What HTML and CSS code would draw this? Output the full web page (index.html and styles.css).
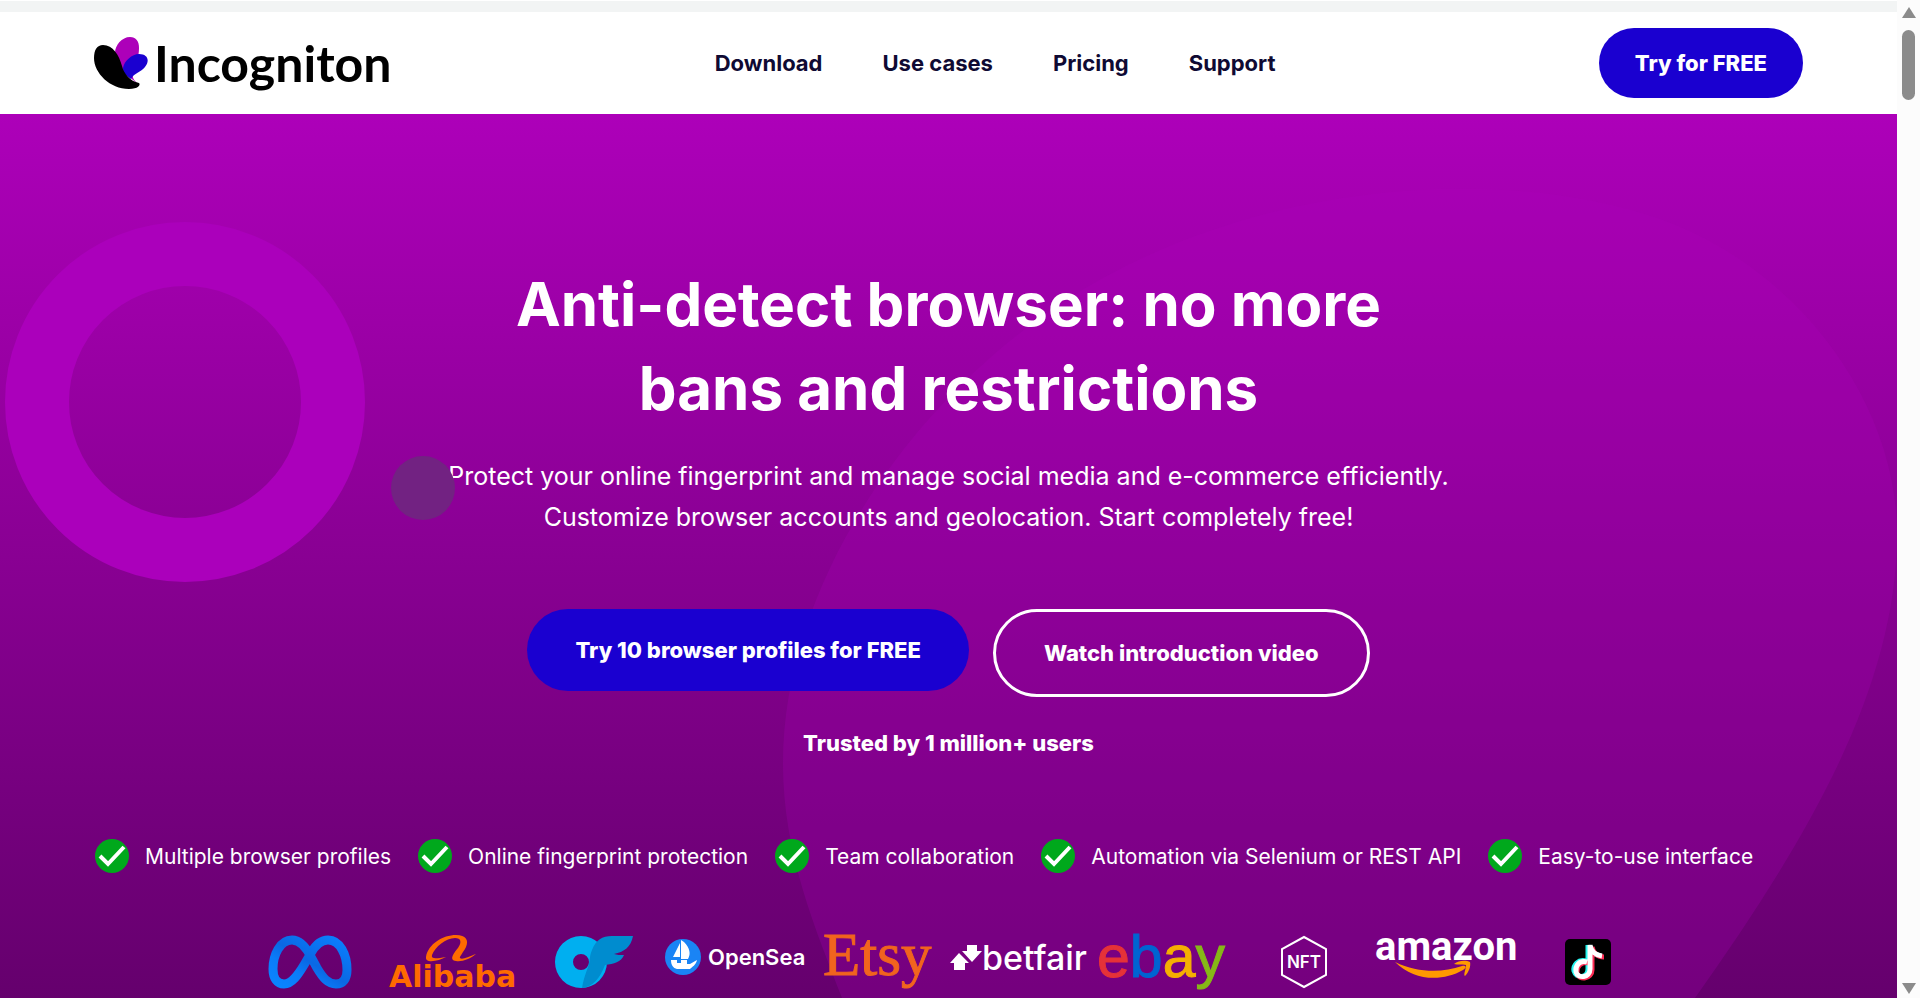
FILE: index.html
```html
<!DOCTYPE html>
<html lang="en">
<head>
    <meta charset="UTF-8">
    <meta name="viewport" content="width=device-width, initial-scale=1.0">
    <title>Incogniton</title>
    <link rel="stylesheet" href="styles.css">
</head>
<body>
    <div class="page">
        <div class="top-strip"></div>
        <header class="header">
            <a href="#" class="brand">
                <svg width="54" height="52" viewBox="0 0 54 52" aria-hidden="true">
                    <path fill="#ad00b9" d="M36 0C28 0 21 8 21 16L28 34L44 47C40 43 38 41 39 37C42 28 45 20 45 11C45 4 42 0 36 0Z"/>
                    <path fill="#1a00d0" d="M45 17C54 17 56 24 51 30C47 35 40 36 37 42C32 39 29 36 29 31C30 24 38 17 45 17Z"/>
                    <path d="M9 8C3 8 0 13 0 21C0 36 16 52 35 52C44 52 47 48 45 46C36 44 30 37 28 29C25 18 19 8 9 8Z"/>
                </svg>
                <span class="brand-name">Incogniton</span>
            </a>
            <nav class="nav">
                <a href="#">Download</a>
                <a href="#">Use cases</a>
                <a href="#">Pricing</a>
                <a href="#">Support</a>
            </nav>
            <button class="btn btn-small">Try for FREE</button>
        </header>

        <main class="hero">
            <svg class="blob" viewBox="0 0 1897 884" preserveAspectRatio="none" aria-hidden="true">
                <path d="M842 884C816 816 783 740 783 650C783 470 910 290 1060 190C1250 65 1500 50 1660 105C1800 155 1897 290 1897 420C1897 580 1800 735 1695 884Z"/>
            </svg>
            <div class="ring"></div>
            <div class="dot"></div>

            <h1>Anti-detect browser: no more<br>bans and restrictions</h1>
            <p class="lead">Protect your online fingerprint and manage social media and e-commerce efficiently.<br>Customize browser accounts and geolocation. Start completely free!</p>

            <div class="actions">
                <button class="btn">Try 10 browser profiles for FREE</button>
                <button class="btn btn-outline">Watch introduction video</button>
            </div>
            <p class="trusted">Trusted by 1 million+ users</p>

            <ul class="features">
                <li><svg class="check" viewBox="0 0 34 34"><circle cx="17" cy="17" r="17"/><path d="M5 17L13 25L29 8"/></svg>Multiple browser profiles</li>
                <li><svg class="check" viewBox="0 0 34 34"><circle cx="17" cy="17" r="17"/><path d="M5 17L13 25L29 8"/></svg>Online fingerprint protection</li>
                <li><svg class="check" viewBox="0 0 34 34"><circle cx="17" cy="17" r="17"/><path d="M5 17L13 25L29 8"/></svg>Team collaboration</li>
                <li><svg class="check" viewBox="0 0 34 34"><circle cx="17" cy="17" r="17"/><path d="M5 17L13 25L29 8"/></svg>Automation via Selenium or REST API</li>
                <li><svg class="check" viewBox="0 0 34 34"><circle cx="17" cy="17" r="17"/><path d="M5 17L13 25L29 8"/></svg>Easy-to-use interface</li>
            </ul>

            <div class="logos">
                <!-- Meta -->
                <svg width="84" height="54" viewBox="0 0 84 54">
                    <defs>
                        <linearGradient id="meta" x1="0" x2="1" y1="1" y2="0">
                            <stop offset="0" stop-color="#0a84ff"/>
                            <stop offset="0.3" stop-color="#0a7cf8"/>
                            <stop offset="0.5" stop-color="#0a68e4"/>
                            <stop offset="1" stop-color="#0a80ff"/>
                        </linearGradient>
                    </defs>
                    <path fill="none" stroke="url(#meta)" stroke-width="9" d="M43 22C38 12 32 5 24 5C12 5 5 20 5 34C5 43 9 49 16 49C24 49 30 40 36 30L43 18C48 9 53 5 60 5C72 5 79 20 79 35C79 44 75 49 68 49C60 49 55 43 49 33Z"/>
                </svg>
                <!-- Alibaba -->
                <svg width="126" height="54" viewBox="0 0 126 54">
                    <path fill="#ff6a00" d="M37 22C39 9 54 0 67 0C77 0 80 5 77 12C74 18 70 22 71 23C73 25 79 22 87 19C81 24 73 27 67 26C60 25 64 19 69 13C73 7 72 3 66 3C57 3 46 12 43 20C42 24 46 24 57 22C50 26 36 29 37 22Z"/>
                    <text class="alibaba" x="0" y="52">Alibaba</text>
                </svg>
                <!-- OnlyFans -->
                <svg width="80" height="54" viewBox="0 0 80 54">
                    <path fill="#00aff0" fill-rule="evenodd" d="M27 1A26 26 0 1 0 27 53A26 26 0 1 0 27 1ZM27 19A8 8 0 1 1 27 35A8 8 0 1 1 27 19Z"/>
                    <path fill="#008ccf" d="M28 53C29 46 31 40 34 32C36 28 35 22 38 15C42 5 48 1 58 1H79C77 12 70 17 60 19C63 20 66 20 70 20C67 27 60 29 51 30C46 43 39 52 28 53Z"/>
                </svg>
                <!-- OpenSea -->
                <svg width="142" height="54" viewBox="0 0 142 54">
                    <circle cx="18" cy="22" r="18" fill="#1a84f5"/>
                    <path fill="#fff" d="M8 22L15 8V22ZM16 5L19 7C25 13 26 19 23 24H16ZM6 25H12V28H16V25H22V29H25L32 25C31 30 27 32 25 34H12C8 33 6 30 6 25Z"/>
                    <text class="opensea" x="43" y="30">OpenSea</text>
                </svg>
                <!-- Etsy -->
                <svg width="110" height="54" viewBox="0 0 110 54">
                    <text class="etsy" x="0" y="40">Etsy</text>
                </svg>
                <!-- Betfair -->
                <svg width="140" height="54" viewBox="0 0 140 54">
                    <path fill="#fff" d="M9 18L19 28H15V35H4V28H0ZM17 10H27V16H32L22 27L12 16H17Z"/>
                    <text class="betfair" x="32" y="35">betfair</text>
                </svg>
                <!-- eBay -->
                <svg width="130" height="54" viewBox="0 0 130 54">
                    <text class="ebay" x="0" y="42"><tspan class="red">e</tspan><tspan class="blue">b</tspan><tspan class="yellow">a</tspan><tspan class="green">y</tspan></text>
                </svg>
                <!-- NFT -->
                <svg width="48" height="54" viewBox="0 0 48 54">
                    <path fill="none" stroke="#fff" stroke-width="2" d="M24 2L46 14V40L24 52L2 40V14Z"/>
                    <text class="nft" x="24" y="33">NFT</text>
                </svg>
                <!-- Amazon -->
                <svg width="142" height="54" viewBox="0 0 142 54">
                    <text class="amazon" x="0" y="25">amazon</text>
                    <path fill="#ff9900" d="M20 27C43 38 67 38 87 31C91 30 92 33 88 35C67 47 39 46 20 27ZM79 29C84 25 91 25 95 27C96 31 94 37 90 41C88 40 91 34 91 30C87 29 83 30 79 29Z"/>
                </svg>
                <!-- TikTok -->
                <svg width="46" height="54" viewBox="0 0 46 54">
                    <rect y="4" width="46" height="46" rx="5"/>
                    <g fill="none" stroke-width="5">
                        <path stroke="#25f4ee" d="M21 26C13 24 8 30 9 36C11 44 23 43 23 34V10C24 17 29 20 34 20"/>
                        <path stroke="#fe2c55" d="M24 28C16 26 11 32 12 38C14 46 27 44 27 35V12C28 18 33 22 39 22"/>
                        <path stroke="#fff" d="M22 27C14 25 10 31 11 37C13 44 25 43 25 34V10C26 17 31 20 37 21"/>
                    </g>
                </svg>
            </div>
        </main>
    </div>

    <div class="scrollbar" aria-hidden="true">
        <svg width="16" height="12" viewBox="0 0 16 12"><path d="M8 0L15 11H1Z"/></svg>
        <div class="thumb"></div>
        <svg class="arrow-down" width="16" height="12" viewBox="0 0 16 12"><path d="M8 12L15 1H1Z"/></svg>
    </div>
</body>
</html>
```

FILE: styles.css
```css
* {
    box-sizing: border-box;
}
body {
    margin: 0;
    display: flex;
    height: 100vh;
    overflow: hidden;
    background-color: #fff;
    font-family: Inter, Roboto, sans-serif;
}
.page {
    flex: 1;
    display: flex;
    flex-direction: column;
    min-width: 0;
}
.top-strip {
    height: 12px;
    background-color: #f2f4f4;
    border-top: 1px solid #fff;
    flex-shrink: 0;
}

/* header */
.header {
    display: flex;
    justify-content: space-between;
    align-items: center;
    height: 102px;
    padding: 0 94px;
    flex-shrink: 0;
}
.brand {
    display: flex;
    align-items: center;
    gap: 6px;
    color: #000;
    text-decoration: none;
}
.brand-name {
    font-family: Lato, sans-serif;
    font-size: 50px;
    font-weight: 700;
    line-height: 52px;
}
.nav {
    display: flex;
    gap: 60px;
}
.nav a {
    color: #0f0a33;
    font-size: 22px;
    font-weight: 700;
    text-decoration: none;
}
.btn {
    height: 82px;
    padding: 0 48px;
    border: none;
    border-radius: 44px;
    background-color: #1a00d0;
    color: #fff;
    font-family: inherit;
    font-size: 22px;
    font-weight: 800;
    white-space: nowrap;
    cursor: pointer;
}
.btn-small {
    height: 70px;
    padding: 0 36px;
}
.btn-outline {
    height: 88px;
    border: 3px solid #fff;
    background-color: transparent;
}

/* hero */
.hero {
    position: relative;
    flex: 1;
    padding-top: 148px;
    background-image: linear-gradient(#ad00b9, #65006d);
    color: #fff;
    text-align: center;
    overflow: hidden;
    isolation: isolate;
}
.blob {
    position: absolute;
    inset: 0;
    width: 100%;
    height: 100%;
    z-index: -1;
    fill: #ad00b9;
    fill-opacity: 0.22;
}
.ring {
    position: absolute;
    top: 108px;
    left: 5px;
    width: 360px;
    height: 360px;
    border: 64px solid #ab00bb;
    border-radius: 50%;
    z-index: -1;
}
.dot {
    position: absolute;
    top: 342px;
    left: 391px;
    width: 64px;
    height: 64px;
    border-radius: 50%;
    background-color: #722282;
}
h1 {
    margin: 0;
    font-size: 60px;
    font-weight: 700;
    line-height: 84px;
}
.lead {
    margin: 26px 0 71px;
    font-size: 25px;
    line-height: 41px;
}
.actions {
    display: flex;
    justify-content: center;
    align-items: flex-start;
    gap: 24px;
}
.trusted {
    margin: 32px 0 82px;
    font-size: 22px;
    font-weight: 800;
    line-height: 28px;
}
.features {
    display: flex;
    gap: 27px;
    margin: 0 0 61px;
    padding: 0 95px;
    list-style: none;
    font-size: 21px;
    line-height: 35px;
    white-space: nowrap;
}
.features li {
    display: flex;
    gap: 16px;
}
.check {
    width: 34px;
    height: 34px;
}
.check circle {
    fill: #00a81c;
}
.check path {
    fill: none;
    stroke: #fff;
    stroke-width: 4;
}

/* company logos */
.logos {
    display: grid;
    grid-template-columns: repeat(10, 142px);
    justify-content: center;
    justify-items: center;
}
.logos svg {
    overflow: visible;
}
.alibaba {
    fill: #ff6a00;
    font: 700 30px "DejaVu Sans", sans-serif;
}
.opensea {
    fill: #fff;
    font: 600 22px Inter, sans-serif;
}
.etsy {
    fill: #f1641e;
    stroke: #f1641e;
    stroke-width: 1px;
    font: 61px "Liberation Serif", serif;
}
.betfair {
    fill: #fff;
    font: 500 34px Inter, sans-serif;
}
.ebay {
    font: 59px "Liberation Sans", sans-serif;
    stroke-width: 1px;
}
.red {
    fill: #e53238;
    stroke: #e53238;
}
.blue {
    fill: #0064d2;
    stroke: #0064d2;
}
.yellow {
    fill: #f5af02;
    stroke: #f5af02;
}
.green {
    fill: #86b817;
    stroke: #86b817;
}
.nft {
    fill: #fff;
    font: 600 17px Inter, sans-serif;
    text-anchor: middle;
}
.amazon {
    fill: #fff;
    font: 700 40px Roboto, sans-serif;
}

/* scrollbar */
.scrollbar {
    display: flex;
    flex-direction: column;
    align-items: center;
    width: 23px;
    padding: 7px 0 4px;
    background-color: #fcfcfc;
    fill: #8b8b8b;
}
.thumb {
    width: 13px;
    height: 70px;
    margin-top: 11px;
    border-radius: 7px;
    background-color: #8b8b8b;
}
.arrow-down {
    margin-top: auto;
}
```
